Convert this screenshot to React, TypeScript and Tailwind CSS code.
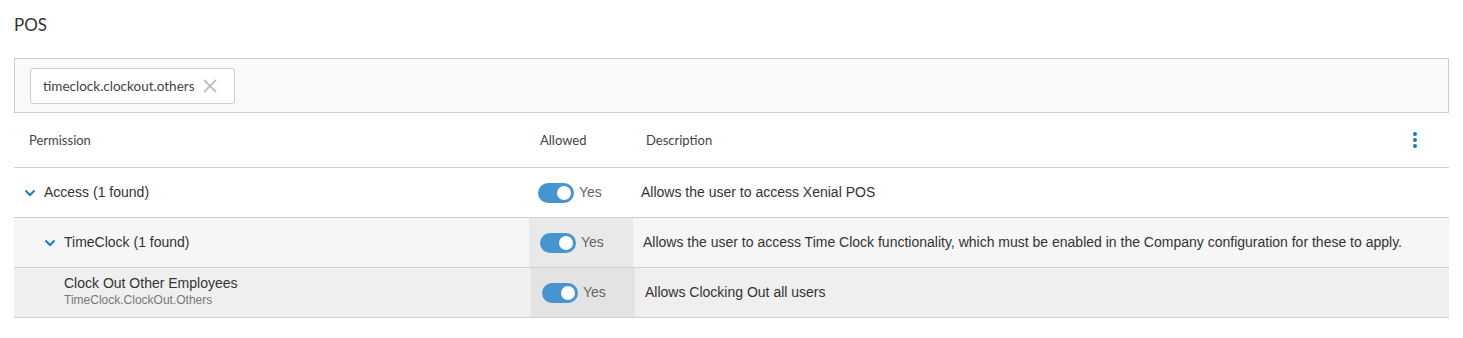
import { ReactNode } from "react";

const Toggle = () => (
  <div className="w-[36px] h-[20px] rounded-full bg-[#4795cf] flex items-center justify-end pr-[3px]">
    <div className="w-[14px] h-[14px] rounded-full bg-white" />
  </div>
);

const Chevron = () => (
  <svg width="12" height="8" viewBox="0 0 12 8" className="shrink-0">
    <path d="M1.5 1.5 L6 6 L10.5 1.5" fill="none" stroke="#1e7ac6" strokeWidth="2" />
  </svg>
);

type RowProps = {
  first: number;
  bg: string;
  cellBg: string;
  label: ReactNode;
  desc: string;
};

const Row = ({ first, bg, cellBg, label, desc }: RowProps) => (
  <div className={`flex h-[50px] border-b border-[#d0d0d0] ${bg}`}>
    <div className="flex items-center shrink-0" style={{ width: first }}>
      {label}
    </div>
    <div className={`w-[104px] shrink-0 flex items-center gap-[5px] pl-[11px] ${cellBg}`}>
      <Toggle />
      <span className="text-[14px] text-[#666]">Yes</span>
    </div>
    <div className="flex items-center pl-[10px] text-[14px] text-[#333]">{desc}</div>
  </div>
);

export default function App() {
  return (
    <div className="w-[1463px] h-[338px] bg-white px-[14px] font-['Liberation_Sans',Arial,sans-serif]">
      <div className="pt-[13px] h-[58px] text-[17px] leading-[24px] text-[#333] font-['Lato',sans-serif]">
        POS
      </div>
      <div className="h-[55px] border border-[#cccccc] bg-[#f9f9f9] pl-[15px] pt-[9px]">
        <div className="w-[205px] h-[36px] bg-white border border-[#cccccc] rounded-[3px] flex items-center pl-[12px] gap-[8px]">
          <span className="text-[13.5px] text-[#444] font-['Lato',sans-serif]">timeclock.clockout.others</span>
          <svg width="14" height="14" viewBox="0 0 14 14">
            <path d="M1 1 L13 13 M13 1 L1 13" stroke="#c2c2c2" strokeWidth="2" />
          </svg>
        </div>
      </div>
      <div className="flex items-center h-[55px] pt-[2px] border-b border-[#d0d0d0] text-[13px] text-[#444] font-['Lato',sans-serif]">
        <div className="w-[515px] pl-[15px] shrink-0">Permission</div>
        <div className="w-[117px] pl-[11px] shrink-0">Allowed</div>
        <div className="flex-1">Description</div>
        <div className="flex flex-col gap-[2px] mr-[32px] mb-[2px]">
          <div className="w-[4px] h-[4px] rounded-full bg-[#1a76c4]" />
          <div className="w-[4px] h-[4px] rounded-full bg-[#1a76c4]" />
          <div className="w-[4px] h-[4px] rounded-full bg-[#1a76c4]" />
        </div>
      </div>
      <Row
        first={513}
        bg="bg-white"
        cellBg="bg-white"
        label={
          <div className="flex items-center gap-[8px] pl-[10px] text-[14px] text-[#333]">
            <Chevron />
            <span>Access (1 found)</span>
          </div>
        }
        desc="Allows the user to access Xenial POS"
      />
      <Row
        first={515}
        bg="bg-[#f6f6f6]"
        cellBg="bg-[#e9e9e9]"
        label={
          <div className="flex items-center gap-[8px] pl-[30px] text-[14px] text-[#333]">
            <Chevron />
            <span>TimeClock (1 found)</span>
          </div>
        }
        desc="Allows the user to access Time Clock functionality, which must be enabled in the Company configuration for these to apply."
      />
      <Row
        first={517}
        bg="bg-[#efefef]"
        cellBg="bg-[#e3e3e3]"
        label={
          <div className="flex flex-col self-start pt-[7px] pl-[50px]">
            <span className="text-[14px] leading-[17px] text-[#333]">Clock Out Other Employees</span>
            <span className="text-[12px] leading-[17px] text-[#777]">TimeClock.ClockOut.Others</span>
          </div>
        }
        desc="Allows Clocking Out all users"
      />
    </div>
  );
}
